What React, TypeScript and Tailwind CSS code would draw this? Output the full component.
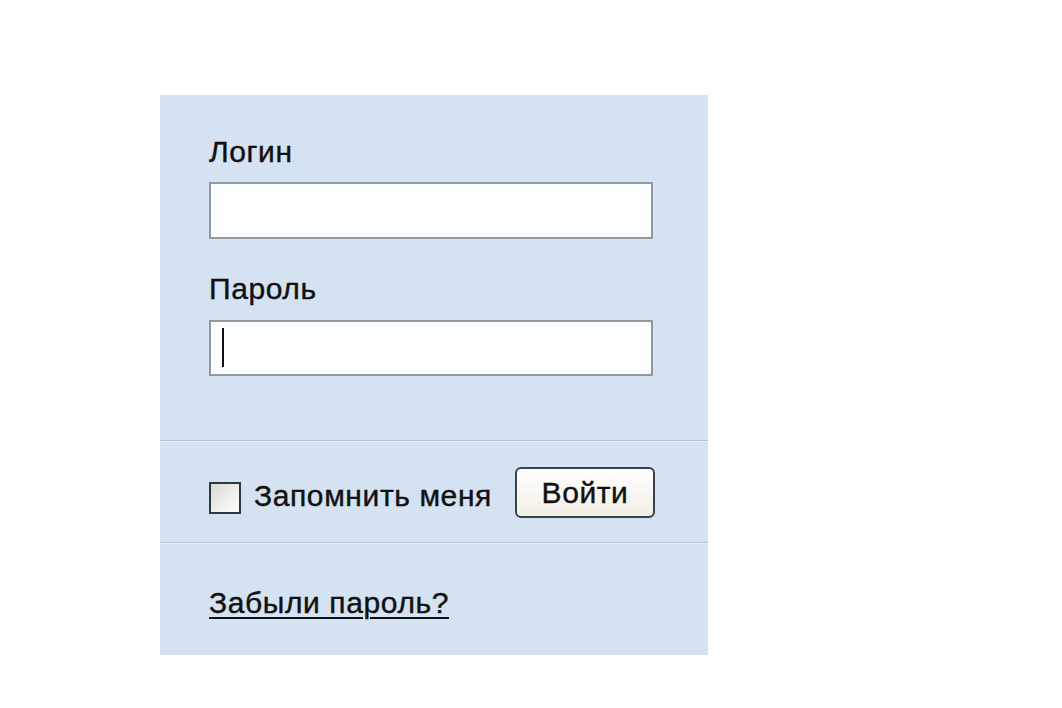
import React from "react";

function App() {
  return (
    <div
      className="min-h-[708px] w-full bg-white pt-[95px] pl-[160px] text-[#111] tracking-[0.6px] [-webkit-text-stroke:0.4px_#111]"
      style={{ fontFamily: '"Liberation Sans", Arial, sans-serif' }}
    >
      <div className="flex w-[548px] flex-col bg-[#d4e2f1]">
        {/* login + password */}
        <div className="flex flex-col pl-[49px] pr-[55px] pt-[40px] pb-[64px]">
          <label className="text-[30px] leading-[34px]">Логин</label>
          <div className="mt-[13px] h-[57px] w-[444px] border-2 border-[#8d99a5] bg-[#fdfefe]" />
          <label className="mt-[33px] text-[30px] leading-[34px]">Пароль</label>
          <div className="mt-[14px] flex h-[56px] w-[444px] items-start border-2 border-[#8d99a5] bg-[#fdfefe] pl-[11px] pt-[6px]">
            <span className="block h-[39px] w-[2px] bg-[#111]" />
          </div>
        </div>
        <div className="h-px bg-[#b3c2d2]" />
        <div className="h-px bg-[#e9f0f8]" />
        {/* remember + submit */}
        <div className="flex items-start pl-[49px] pr-[53px] pt-[25px] pb-[24px]">
          <span className="mt-[15px] block h-[32px] w-[32px] border-2 border-[#2f3740] bg-gradient-to-br from-[#d9d9d2] to-white" />
          <span className="ml-[13px] mt-[12px] text-[30px] leading-[34px]">Запомнить меня</span>
          <button className="ml-auto flex h-[51px] w-[140px] items-center justify-center rounded-[6px] border-2 border-[#36424d] bg-gradient-to-b from-white to-[#f1eee4] text-[30px] leading-[34px] text-[#111]">
            Войти
          </button>
        </div>
        <div className="h-px bg-[#b3c2d2]" />
        <div className="h-px bg-[#e9f0f8]" />
        {/* forgot */}
        <div className="pl-[49px] pt-[42px] pb-[35px]">
          <a
            href="#"
            className="text-[30px] leading-[34px] text-[#111] underline decoration-2 underline-offset-[4px]"
          >
            Забыли пароль?
          </a>
        </div>
      </div>
    </div>
  );
}

export default App;
